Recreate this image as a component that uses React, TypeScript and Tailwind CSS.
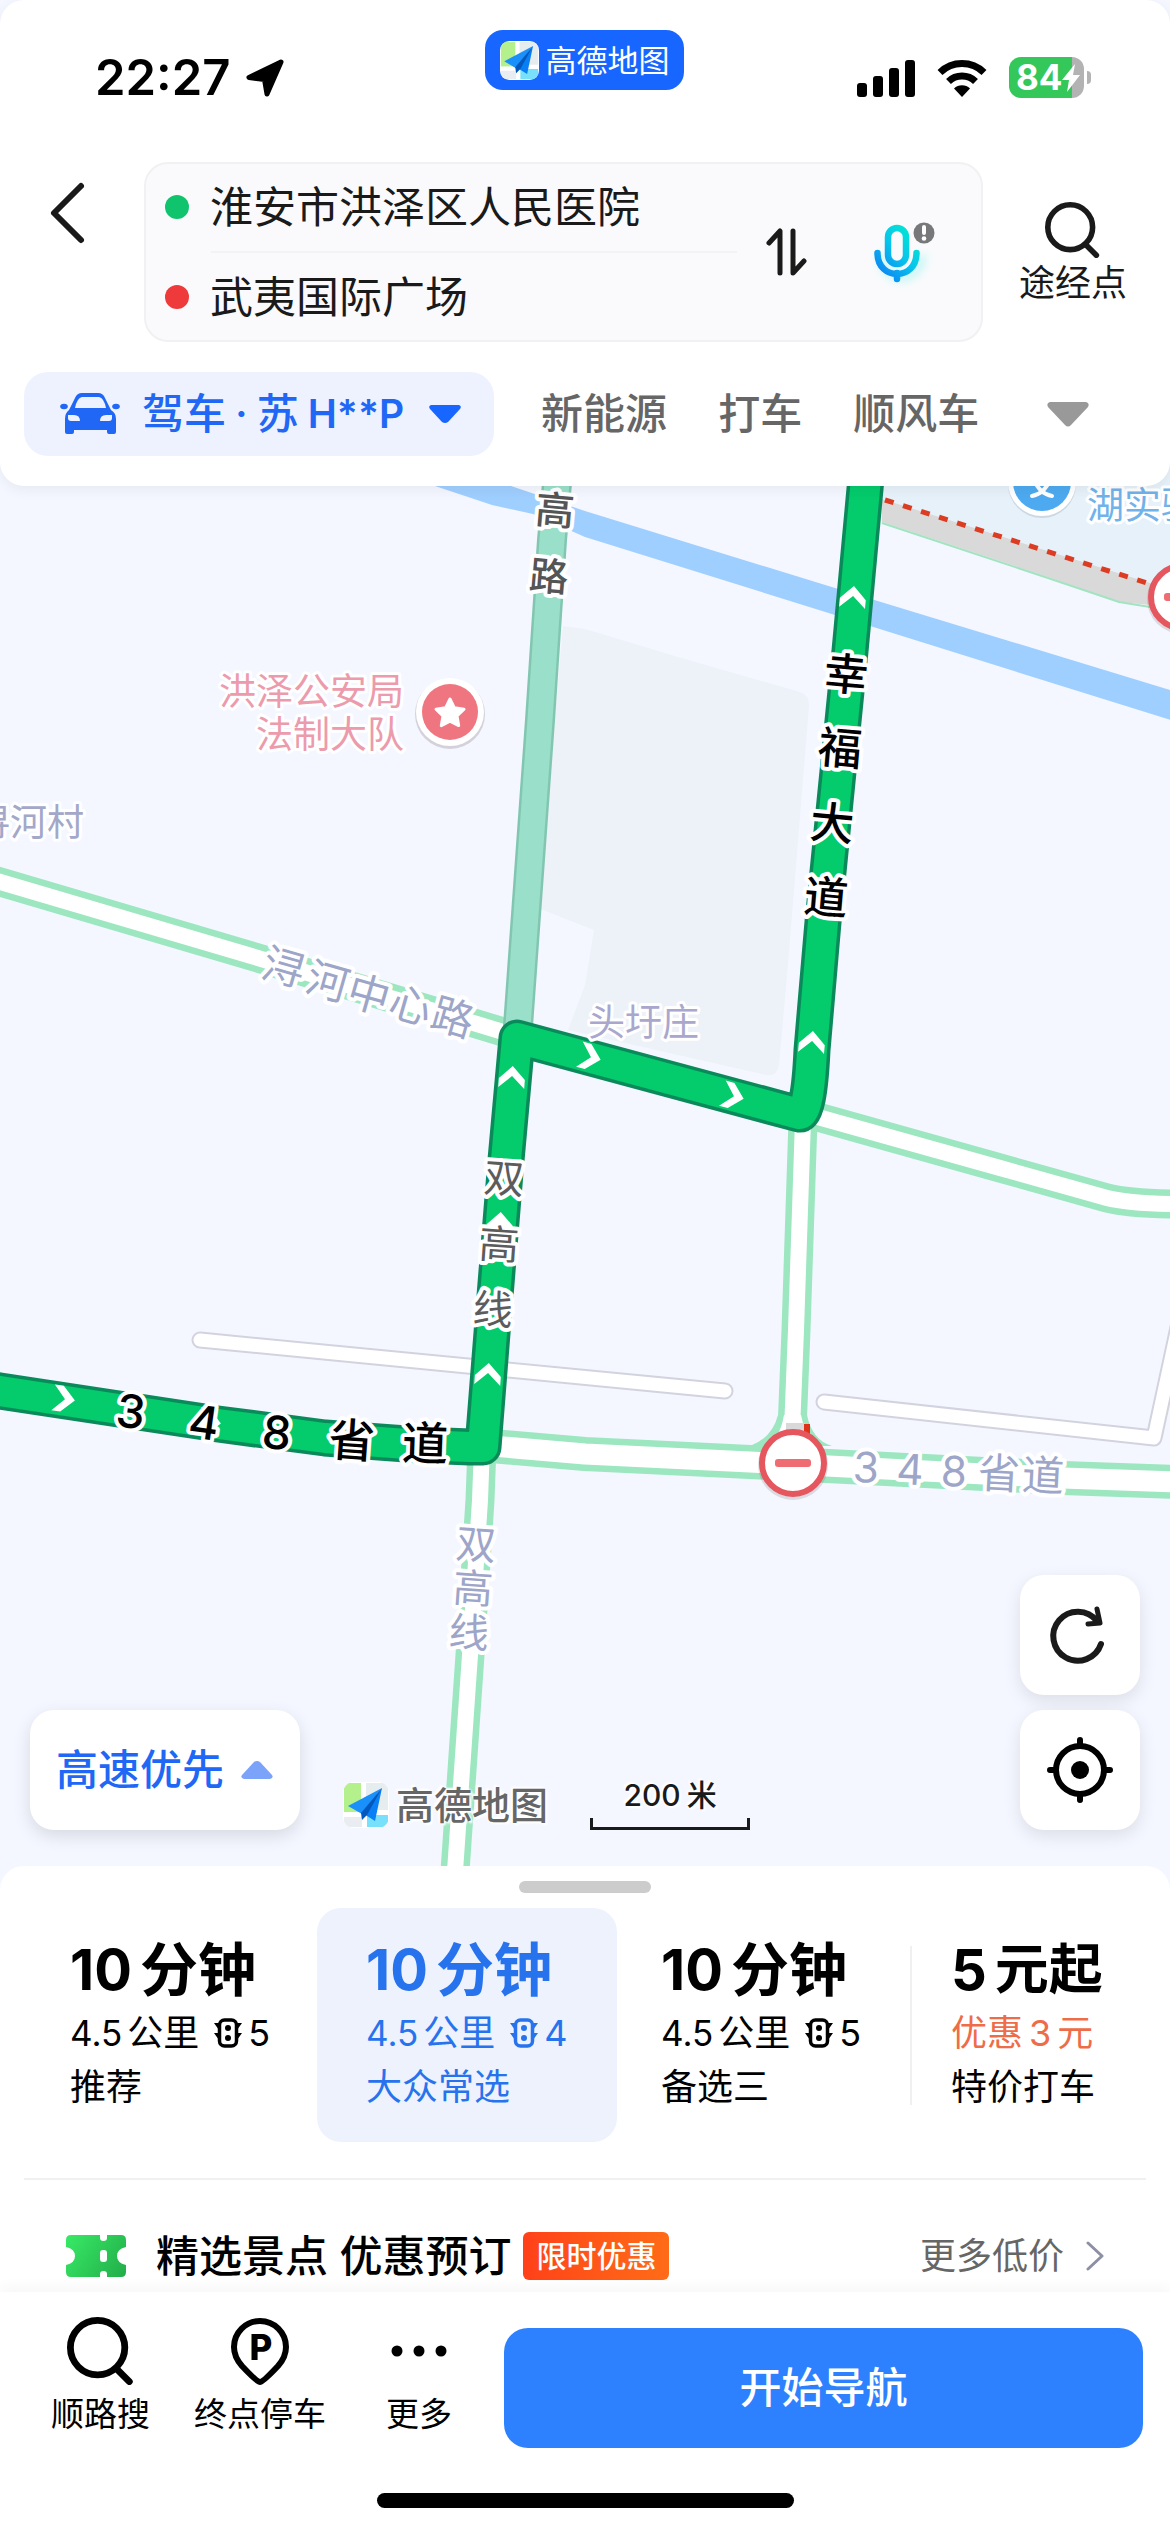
import type { ReactNode } from "react";

function AmapMark({ className }: { className: string }) {
  return (
    <svg viewBox="0 0 46 46" className={className} aria-hidden="true">
      <defs>
        <clipPath id="mark-clip">
          <rect width="46" height="46" rx="11" />
        </clipPath>
      </defs>
      <g clipPath="url(#mark-clip)">
        <rect width="46" height="46" fill="#fff" />
        <rect x="1" y="1" width="17" height="29" fill="#b4f08c" />
        <rect x="23" y="1" width="22" height="27" fill="#e6edee" />
        <rect x="1" y="35" width="18" height="10" fill="#e9edf1" />
        <rect x="24" y="33" width="21" height="12" fill="#79e0fb" />
      </g>
      <path d="M39 6 5 24l14 8z" fill="#1a90fb" />
      <path d="M39 6 32 39 21 32z" fill="#087ff5" />
      <path d="M39 6 18 31l1 7 5-5z" fill="#0458bd" />
    </svg>
  );
}

function SearchIcon({ className }: { className: string }) {
  return (
    <svg viewBox="0 0 60 60" className={className} fill="none" stroke="currentColor" strokeWidth="6" strokeLinecap="round" aria-hidden="true">
      <circle cx="27" cy="27" r="24" />
      <path d="m44 46 11 11" />
    </svg>
  );
}

function TrafficLight() {
  return (
    <svg viewBox="0 0 28 30" className="h-[30px] w-7" aria-hidden="true">
      <path d="M0 5h5v7zM0 15h5v7zM28 5h-5v7zM28 15h-5v7z" fill="currentColor" />
      <rect x="5.500" y="2" width="17" height="26" rx="5" fill="none" stroke="currentColor" strokeWidth="3.500" />
      <circle cx="14" cy="10" r="3" fill="currentColor" />
      <circle cx="14" cy="20" r="3" fill="currentColor" />
    </svg>
  );
}

function StatusBar() {
  return (
    <div className="grid h-[162px] grid-cols-3 items-start px-[79px]">
      <div className="flex items-center gap-4 pt-[46px] pl-4">
        <span className="text-[49px] leading-[64px] font-semibold text-black">22:27</span>
        <svg viewBox="0 0 40 40" className="size-10" aria-hidden="true">
          <path d="M35 4 3 19.500 18.500 21.500 21 36z" fill="#000" stroke="#000" strokeWidth="5" strokeLinejoin="round" />
        </svg>
      </div>
      <div className="mt-[30px] flex h-[60px] items-center gap-1.5 justify-self-center rounded-[18px] bg-[#1766ff] px-[15px] text-white">
        <AmapMark className="size-[39px]" />
        <span className="text-[31px] leading-none">高德地图</span>
      </div>
      <div className="flex items-center justify-end pt-[57px]">
        <svg viewBox="0 0 58 38" className="h-[38px] w-[58px]" aria-hidden="true">
          <rect x="0" y="24" width="10" height="14" rx="3" />
          <rect x="16" y="17" width="10" height="21" rx="3" />
          <rect x="32" y="9" width="10" height="29" rx="3" />
          <rect x="48" y="1" width="10" height="37" rx="3" />
        </svg>
        <svg viewBox="0 0 50 38" className="ml-[22px] h-[38px] w-[50px]" fill="none" stroke="#000" strokeWidth="7" aria-hidden="true">
          <path d="M3 13.500a31.500 31.500 0 0 1 44 0" />
          <path d="M11.500 22.500a19.500 19.500 0 0 1 27 0" />
          <path d="M25 38l-8-8.500a11.500 11.500 0 0 1 16 0z" fill="#000" stroke="none" />
        </svg>
        <div className="relative ml-[22px] flex h-[41px] w-[75px] items-center overflow-hidden rounded-[12px] bg-[linear-gradient(90deg,#34c759_84%,#b3b3b3_84%)] pl-[7px]">
          <span className="text-[35px] leading-none font-bold text-white">84</span>
          <svg viewBox="0 0 18 28" className="absolute right-1 h-7 w-[18px]" aria-hidden="true">
            <path d="M13 0 0 16h7L5 28 18 11h-7z" fill="#fff" />
          </svg>
        </div>
        <div className="ml-[3px] h-[13px] w-1 rounded-r-full bg-[#b3b3b3]" />
      </div>
    </div>
  );
}

function RouteInputs() {
  return (
    <div className="flex items-start pr-[43px] pl-[48px]">
      <button aria-label="返回" className="mt-[18px] w-[96px]">
        <svg viewBox="0 0 40 66" className="h-[66px] w-10" fill="none" stroke="#1a1a1a" strokeWidth="6" strokeLinecap="round" strokeLinejoin="round" aria-hidden="true">
          <path d="M33 6 6 33l27 27" />
        </svg>
      </button>
      <div className="flex h-[180px] min-w-0 flex-1 items-center rounded-[24px] border-2 border-[#f1f1f3] bg-[#fafafc]">
        <div className="flex min-w-0 flex-1 flex-col">
          <label className="flex h-[88px] items-center gap-[21px] pl-[19px]">
            <span className="size-6 shrink-0 rounded-full bg-[#10c46d]" />
            <input aria-label="起点" readOnly value="淮安市洪泽区人民医院" className="w-full min-w-0 bg-transparent text-[43px] leading-[60px] text-[#1a1a1a] outline-none" />
          </label>
          <div className="ml-[65px] h-0.5 bg-[#f3f3f5]" />
          <label className="flex h-[88px] items-center gap-[21px] pl-[19px]">
            <span className="size-6 shrink-0 rounded-full bg-[#ef3a3c]" />
            <input aria-label="终点" readOnly value="武夷国际广场" className="w-full min-w-0 bg-transparent text-[43px] leading-[60px] text-[#1a1a1a] outline-none" />
          </label>
        </div>
        <button aria-label="交换起终点" className="ml-[28px]">
          <svg viewBox="0 0 42 52" className="h-[52px] w-[42px]" fill="none" stroke="#1a1a1a" strokeWidth="5" strokeLinecap="round" strokeLinejoin="round" aria-hidden="true">
            <path d="M4 17 15 5v42M28 5v42l11-12" />
          </svg>
        </button>
        <button aria-label="语音输入" className="mr-[40px] ml-[64px]">
          <svg viewBox="0 0 70 70" className="size-[70px] overflow-visible" fill="none" aria-hidden="true">
            <defs>
              <linearGradient id="mic" x1="4" y1="60" x2="46" y2="20" gradientUnits="userSpaceOnUse">
                <stop offset="0" stopColor="#0b78f6" />
                <stop offset="0.600" stopColor="#08c6ea" />
                <stop offset="1" stopColor="#02e5d4" />
              </linearGradient>
              <filter id="mic-glow" x="-50%" y="-50%" width="200%" height="200%">
                <feGaussianBlur stdDeviation="5" />
              </filter>
            </defs>
            <path d="M10 38c2 30 38 30 42 0" stroke="#8ff3ee" strokeWidth="6" filter="url(#mic-glow)" opacity="0.700" />
            <rect x="17" y="11" width="18" height="36" rx="9" stroke="url(#mic)" strokeWidth="6.500" />
            <path d="M6.500 36c0 28 39 28 39 0M26 56v6" stroke="url(#mic)" strokeWidth="6.500" strokeLinecap="round" />
            <circle cx="53" cy="16" r="10.500" fill="#77787a" />
            <path d="M53 10v6" stroke="#fff" strokeWidth="4" strokeLinecap="round" />
            <circle cx="53" cy="21.500" r="2.300" fill="#fff" />
          </svg>
        </button>
      </div>
      <button className="mt-[40px] ml-[36px] flex flex-col items-center text-[#1a1a1a]">
        <SearchIcon className="size-[56px]" />
        <span className="text-[36px] leading-[50px]">途经点</span>
      </button>
    </div>
  );
}

function ModeTabs() {
  return (
    <div role="tablist" className="mt-[30px] mb-[30px] flex items-center pr-[81px] pl-6 text-[42px] leading-[60px] font-medium text-[#666]">
      <button role="tab" aria-selected="true" className="flex h-[84px] items-center rounded-[24px] bg-[#eef2fe] pr-8 pl-9 text-[#2067f5]">
        <svg viewBox="0 0 60 42" className="mr-[22px] h-[42px] w-[60px]" fill="currentColor" aria-hidden="true">
          <path
            fillRule="evenodd"
            d="M9 17 15 5Q17 0 22 0H38Q43 0 45 5L51 17Q56 20 56 26V39Q56 41 54 41H49Q47 41 47 39V37H14V39Q14 41 12 41H7Q5 41 5 39V26Q5 20 9 17zM15 15H46Q44 5 39 4H22Q17 5 15 15zM8 22V25Q8 28 11 28H20Q20 22 14 22zM52 22V25Q52 28 49 28H40Q40 22 46 22z"
          />
          <ellipse cx="4" cy="13.500" rx="3.800" ry="2.800" />
          <ellipse cx="56" cy="13.500" rx="3.800" ry="2.800" />
        </svg>
        <span className="flex items-center gap-[9px] whitespace-nowrap">
          <span>驾车</span>
          <span>·</span>
          <span>苏</span>
          <span className="text-[39px] font-semibold">H**P</span>
        </span>
        <svg viewBox="0 0 34 20" className="ml-6 h-5 w-[34px]" fill="#1766ff" aria-hidden="true">
          <path d="M3 1h28q3 1 1 4L20 18q-3 2-6 0L2 5q-2-3 1-4z" />
        </svg>
      </button>
      <button role="tab" aria-selected="false" className="ml-[47px]">新能源</button>
      <button role="tab" aria-selected="false" className="ml-[51px]">打车</button>
      <button role="tab" aria-selected="false" className="ml-[51px]">顺风车</button>
      <button aria-label="更多出行方式" className="ml-auto">
        <svg viewBox="0 0 42 25" className="h-[25px] w-[42px]" fill="#999" aria-hidden="true">
          <path d="M3 0h36q4 1 2 5L24 23q-3 3-6 0L1 5Q-1 1 3 0z" />
        </svg>
      </button>
    </div>
  );
}

type Glyph = [string, number, number, number];

function Label({ glyphs, size, fill, weight = 400 }: { glyphs: Glyph[]; size: number; fill: string; weight?: number }) {
  return (
    <g fontSize={size} fill={fill} fontWeight={weight} textAnchor="middle" stroke="#fff" strokeWidth="8" strokeLinejoin="round" paintOrder="stroke">
      {glyphs.map(([char, x, y, angle], i) => (
        <text key={i} transform={`translate(${x} ${y}) rotate(${angle})`} dy="0.37em">
          {char}
        </text>
      ))}
    </g>
  );
}

const ARROWS = [
  [853, 597, 5],
  [812, 1042, 5],
  [590, 1057, 105],
  [733, 1096, 105],
  [512, 1077, 4],
  [500, 1223, 4],
  [488, 1374, 4],
  [64, 1399, 98],
  [210, 1422, 98],
];

const MAJOR = [
  "M-10 879 268 961 510 1034",
  "M800 1112 1000 1168 1107 1198Q1126 1203 1170 1204H1180",
  "M803 1120 796 1330 792 1430",
];
const LOWER = "M482 1446 480 1500 470 1655 453 1900";
const PROVINCIAL = "M480 1445 585 1454 750 1462 1063 1478 1180 1482";
const MINOR = ["M200 1340 725 1391", "M824 1402 1154 1438 1183 1304"];
const ROUTE = "M868 450 866 478 850 651 823 922 812 1050Q809 1115 799 1114L517 1038 506 1160 492 1333 483 1447H470L420 1445 325 1438 218 1424 112 1408 0 1391-20 1388";

function NoEntry({ x, y }: { x: number; y: number }) {
  return (
    <g>
      <circle cx={x} cy={y + 2} r="35" fill="#6b5560" opacity="0.180" />
      <circle cx={x} cy={y} r="31" fill="#fff" stroke="#e5565f" strokeWidth="6" />
      <rect x={x - 18} y={y - 4} width="36" height="8" rx="3" fill="#ee6c72" />
    </g>
  );
}

function MapCanvas() {
  return (
    <svg viewBox="0 462 1170 1428" preserveAspectRatio="xMidYMid slice" className="absolute inset-0 size-full" role="img" aria-label="路线地图">
      <rect x="-600" y="0" width="2400" height="2600" fill="#f4f7ff" />
      <path d="M563 626 585 629 678 657 800 692Q810 696 809 706L788 964 779 1065Q777 1077 766 1075L568 1030 585 985 594 930 548 912 538 908z" fill="#edf1f8" />
      <path d="M884 450H1200V598L882 499z" fill="#e6f1fa" />
      <path d="M882 499 1160 586V606L1119 602 1048 577 882 522z" fill="#d9d9d9" />
      <path d="M882 523 1048 578 1119 602 1150 607" fill="none" stroke="#a3e4c0" strokeWidth="2" />
      <path d="M400 475 435 486 492 505 533 514 585 537 835 615 1180 723V693L835 588 585 511 511 486 480 470z" fill="#9fcfff" />
      <path d="M885 500 1150 584" stroke="#dc3c22" strokeWidth="5" strokeDasharray="9 9.900" fill="none" />

      <g fill="none" strokeLinejoin="round" strokeLinecap="round">
        {MINOR.map((d) => (
          <path key={d} d={d} stroke="#d3d3e0" strokeWidth="17" />
        ))}
        {MINOR.map((d) => (
          <path key={d} d={d} stroke="#fff" strokeWidth="13" />
        ))}
      </g>

      <g fill="none" strokeLinejoin="round">
        {[...MAJOR, LOWER].map((d) => (
          <path key={d} d={d} stroke="#9ce6c0" strokeWidth="29" />
        ))}
        <path d={PROVINCIAL} stroke="#9ce6c0" strokeWidth="34" />
        <path d="M778 1415Q772 1438 750 1446H832Q812 1440 807 1415z" fill="#9ce6c0" />
        {[...MAJOR, LOWER].map((d) => (
          <path key={d} d={d} stroke="#fff" strokeWidth="16" />
        ))}
        <path d={PROVINCIAL} stroke="#fff" strokeWidth="21" />
        <path d="M784 1415Q780 1440 760 1455H824Q806 1440 801 1415z" fill="#fff" />
      </g>

      <path d="M559 460 552 540 540 720 517 1040" fill="none" stroke="#82c6b0" strokeWidth="30" />
      <path d="M559 460 552 540 540 720 517 1040" fill="none" stroke="#9adfca" strokeWidth="25" />

      <path d={ROUTE} fill="none" stroke="#0a8a5a" strokeWidth="37" strokeLinejoin="round" />
      <path d={ROUTE} fill="none" stroke="#04cb6c" strokeWidth="30" strokeLinejoin="round" />
      {ARROWS.map(([x, y, angle]) => (
        <path key={`${x}-${y}`} d="M0-11 13 2V11L0-1-13 11V2z" fill="#fff" transform={`translate(${x} ${y}) rotate(${angle})`} />
      ))}

      <rect x="786" y="1423" width="19" height="8" fill="#d9d9d9" />
      <rect x="804" y="1424" width="6" height="12" fill="#e03218" />
      <NoEntry x={793} y={1463} />
      <NoEntry x={1182} y={597} />

      <circle cx="1042" cy="484" r="34" fill="#9aa8b8" opacity="0.350" />
      <circle cx="1042" cy="482" r="34" fill="#fff" />
      <circle cx="1042" cy="482" r="29" fill="#4daaf0" />
      <path d="M1034 480Q1040 494 1052 496M1050 480Q1044 494 1032 496" fill="none" stroke="#fff" strokeWidth="4" strokeLinecap="round" />

      <circle cx="450" cy="714" r="35" fill="#8a7a88" opacity="0.300" />
      <circle cx="450" cy="712" r="34" fill="#fff" />
      <circle cx="450" cy="712" r="28" fill="#ef7680" />
      <path d="m450 699 4.400 8.800 9.600 1.400-7 6.800 1.700 9.600-8.700-4.500-8.700 4.500 1.700-9.600-7-6.800 9.600-1.400z" fill="#fff" stroke="#fff" strokeWidth="3" strokeLinejoin="round" />

      <g fontSize="37" stroke="#fff" strokeWidth="6" strokeLinejoin="round" paintOrder="stroke">
        <text x="404" y="705" fill="#ec9bac" textAnchor="end">洪泽公安局</text>
        <text x="404" y="748" fill="#ec9bac" textAnchor="end">法制大队</text>
        <text x="84" y="836" fill="#a3a8c9" textAnchor="end">浔河村</text>
        <text x="588" y="1036" fill="#a9a7cd">头圩庄</text>
        <text x="1087" y="519" fill="#71b2ea">湖实验</text>
      </g>
      <Label size={39} fill="#555" weight={500} glyphs={[["高", 555, 510, 5], ["路", 549, 576, 5]]} />
      <Label size={44} fill="#000" weight={500} glyphs={[["幸", 846, 674, 5], ["福", 840, 748, 5], ["大", 832, 823, 5], ["道", 826, 897, 5]]} />
      <Label size={40} fill="#5c5c5c" glyphs={[["双", 504, 1178, 4], ["高", 499, 1244, 4], ["线", 493, 1309, 4]]} />
      <Label size={46} fill="#000" weight={500} glyphs={[["3", 131, 1411, 8], ["4", 204, 1422, 8], ["8", 277, 1432, 6], ["省", 352, 1440, 4], ["道", 425, 1443, 2]]} />
      <Label size={42} fill="#9da5c8" glyphs={[["浔", 284, 967, 16], ["河", 328, 981, 16], ["中", 369, 994, 16], ["心", 411, 1005, 16], ["路", 453, 1017, 16]]} />
      <Label size={42} fill="#9da5c8" glyphs={[["3", 866, 1467, 3], ["4", 910, 1469, 3], ["8", 954, 1471, 3], ["省", 999, 1473, 3], ["道", 1043, 1475, 3]]} />
      <Label size={40} fill="#9da5c8" glyphs={[["双", 476, 1544, 4], ["高", 473, 1588, 4], ["线", 469, 1632, 4]]} />
    </svg>
  );
}

const HALO = "[text-shadow:0_0_3px_#fff,0_0_3px_#fff,2px_2px_2px_#fff,-2px_-2px_2px_#fff]";

function MapControls() {
  return (
    <div className="absolute inset-x-[30px] bottom-[60px] flex items-end">
      <button className="flex h-[120px] w-[270px] items-center gap-[17px] rounded-[24px] bg-white pl-[26px] text-[42px] leading-none font-medium text-[#2067f5] shadow-[0_6px_18px_rgba(0,0,0,0.12)]">
        高速优先
        <svg viewBox="0 0 32 20" className="h-5 w-8" fill="#7ba3fa" aria-hidden="true">
          <path d="M3 19h26q4-1 2-4L19 2q-3-2-6 0L1 15q-2 3 2 4z" />
        </svg>
      </button>
      <div className={`ml-[43px] flex items-center gap-[7px] text-[38px] leading-[50px] font-medium text-[#666] ${HALO}`}>
        <AmapMark className="size-[46px]" />
        高德地图
      </div>
      <div className="ml-[42px] flex w-[160px] flex-col items-center">
        <span className={`flex gap-1.5 text-[30px] leading-[46px] font-medium text-[#1a1a1a] ${HALO}`}>
          <span>200</span>
          <span>米</span>
        </span>
        <span className="h-3 w-full border-x-[3px] border-b-[3px] border-[#1a1a1a]" />
      </div>
      <div className="ml-auto flex flex-col gap-[15px]">
        <button aria-label="刷新" className="flex size-[120px] items-center justify-center rounded-[24px] bg-white shadow-[0_6px_18px_rgba(0,0,0,0.10)]">
          <svg viewBox="0 0 66 66" className="size-[66px]" fill="none" stroke="#1a1a1a" strokeWidth="6" strokeLinecap="round" strokeLinejoin="round" aria-hidden="true">
            <path d="M54 42A24.500 24.500 0 1 1 50 19" />
            <path d="M50 7 53 21 41 22" strokeWidth="5" />
          </svg>
        </button>
        <button aria-label="定位" className="flex size-[120px] items-center justify-center rounded-[24px] bg-white shadow-[0_6px_18px_rgba(0,0,0,0.10)]">
          <svg viewBox="0 0 66 66" className="size-[66px]" fill="none" stroke="#000" strokeWidth="6" strokeLinecap="round" aria-hidden="true">
            <circle cx="33" cy="33" r="24" />
            <path d="M33 3v5M33 58v5M3 33h5M58 33h5" />
            <circle cx="33" cy="33" r="9" fill="#000" stroke="none" />
          </svg>
        </button>
      </div>
    </div>
  );
}

function PlanCard({ pad, title, detail, note, selected, light }: { pad: string; title: ReactNode; detail: ReactNode; note: string; selected?: boolean; light?: ReactNode }) {
  return (
    <button
      aria-pressed={!!selected}
      className={`flex h-[234px] flex-col items-start rounded-[24px] pt-[24px] text-left whitespace-nowrap ${pad} ${selected ? "bg-[#edf2fd] text-[#2773ee]" : "text-black"}`}
    >
      <span className="flex h-[76px] items-center gap-2 text-[56px] leading-[76px] font-bold">{title}</span>
      <span className="flex items-center gap-[5px] text-[36px] leading-[50px]">
        {detail}
        {light && (
          <span className="ml-2.5 flex items-center gap-1.5">
            <TrafficLight />
            {light}
          </span>
        )}
      </span>
      <span className="text-[36px] leading-[58px]">{note}</span>
    </button>
  );
}

const MINUTES = (
  <>
    <span>10</span>
    <span className="text-[58px]">分钟</span>
  </>
);

const DISTANCE = (
  <>
    <span className="text-[35px]">4.5</span>
    <span>公里</span>
  </>
);

function Plans() {
  return (
    <div className="grid grid-cols-[297fr_300fr_293fr_240fr] px-5">
      <PlanCard pad="pl-[50px]" title={MINUTES} detail={DISTANCE} light="5" note="推荐" />
      <PlanCard pad="pl-[49px]" title={MINUTES} detail={DISTANCE} light="4" note="大众常选" selected />
      <PlanCard pad="pl-[44px]" title={MINUTES} detail={DISTANCE} light="5" note="备选三" />
      <div className="flex items-start">
        <div className="mt-[38px] h-[159px] w-0.5 bg-[#f0f0f0]" />
        <PlanCard
          pad="pl-[39px]"
          title={
            <>
              <span>5</span>
              <span className="text-[54px]">元起</span>
            </>
          }
          detail={
            <span className="flex gap-1.5 text-[#ee6c48]">
              <span>优惠</span>
              <span>3</span>
              <span>元</span>
            </span>
          }
          note="特价打车"
        />
      </div>
    </div>
  );
}

function Promo() {
  return (
    <a href="#deals" className="mx-6 flex h-[114px] items-center border-t-2 border-[#f0f0f0] pt-[40px] pr-[42px] pl-[42px]">
      <svg viewBox="0 0 60 42" className="h-[42px] w-[60px] shrink-0" aria-hidden="true">
        <defs>
          <linearGradient id="ticket" x1="0" y1="0" x2="60" y2="42" gradientUnits="userSpaceOnUse">
            <stop offset="0" stopColor="#38ea66" />
            <stop offset="1" stopColor="#22ad49" />
          </linearGradient>
        </defs>
        <path d="M5 0H34v3q0 3 3.500 3T41 3V0H55q5 0 5 5v7q-9 2-9 9t9 9v7q0 5-5 5H41v-3q0-3-3.500-3T34 39v3H5q-5 0-5-5v-7q9-2 9-9T0 12V5q0-5 5-5z" fill="url(#ticket)" />
        <rect x="34" y="15" width="7" height="12" rx="3" fill="#fff" />
      </svg>
      <span className="ml-[30px] text-[43px] leading-[60px] font-medium whitespace-nowrap text-black">精选景点 优惠预订</span>
      <span className="ml-[12px] flex h-12 items-center rounded-[6px] bg-linear-to-r from-[#ff4019] to-[#ff6b17] px-[13px] text-[30px] leading-none font-medium whitespace-nowrap text-white">限时优惠</span>
      <span className="ml-auto text-[36px] leading-[50px] whitespace-nowrap text-[#666]">更多低价</span>
      <svg viewBox="0 0 18 30" className="ml-[22px] h-[30px] w-[18px]" fill="none" stroke="#8d90a5" strokeWidth="3" strokeLinecap="round" strokeLinejoin="round" aria-hidden="true">
        <path d="m2 2 14 13L2 28" />
      </svg>
    </a>
  );
}

function BottomBar() {
  return (
    <nav className="relative bg-white px-[27px] pt-[25px] pb-6 shadow-[0_-4px_14px_rgba(0,0,0,0.04)]">
      <div className="flex items-start text-[33px] leading-[46px] text-black">
        <button className="ml-6 flex flex-col items-center gap-1.5 whitespace-nowrap">
          <SearchIcon className="size-[68px]" />
          顺路搜
        </button>
        <button className="ml-[44px] flex flex-col items-center gap-1.5 whitespace-nowrap">
          <svg viewBox="0 0 60 68" className="h-[68px] w-[60px]" aria-hidden="true">
            <path d="M30 65Q27 65 12 49Q4 40 4 30A26 26 0 0 1 56 30Q56 40 48 49Q33 65 30 65z" fill="none" stroke="#000" strokeWidth="6" strokeLinejoin="round" />
            <text x="31" y="43" textAnchor="middle" fontSize="35" fontWeight="800" fill="#000">P</text>
          </svg>
          终点停车
        </button>
        <button className="ml-[60px] flex flex-col items-center gap-1.5 whitespace-nowrap">
          <svg viewBox="0 0 56 68" className="h-[68px] w-14" aria-hidden="true">
            <circle cx="6" cy="34" r="5.500" />
            <circle cx="28" cy="34" r="5.500" />
            <circle cx="50" cy="34" r="5.500" />
          </svg>
          更多
        </button>
        <button className="mt-[11px] ml-[52px] h-[120px] flex-1 rounded-[24px] bg-[#2d81ff] text-[42px] leading-none font-medium text-white">开始导航</button>
      </div>
      <div className="mx-auto mt-[45px] h-[15px] w-[417px] rounded-full bg-black" />
    </nav>
  );
}

export default function App() {
  return (
    <div className="flex min-h-screen flex-col overflow-hidden bg-[#f4f7ff] font-[Inter,'Noto_Sans_CJK_SC',sans-serif]">
      <header className="relative z-10 rounded-[24px] bg-white shadow-[0_4px_14px_rgba(0,0,0,0.06)]">
        <StatusBar />
        <RouteInputs />
        <ModeTabs />
      </header>
      <main className="relative -my-6 min-h-[900px] flex-1 overflow-hidden">
        <MapCanvas />
        <MapControls />
      </main>
      <section className="relative z-10 rounded-t-[24px] bg-white pt-[15px]">
        <div className="mx-auto mb-[15px] h-3 w-[132px] rounded-full bg-[#ccc]" />
        <Plans />
        <div className="h-9" />
        <Promo />
        <BottomBar />
      </section>
    </div>
  );
}
